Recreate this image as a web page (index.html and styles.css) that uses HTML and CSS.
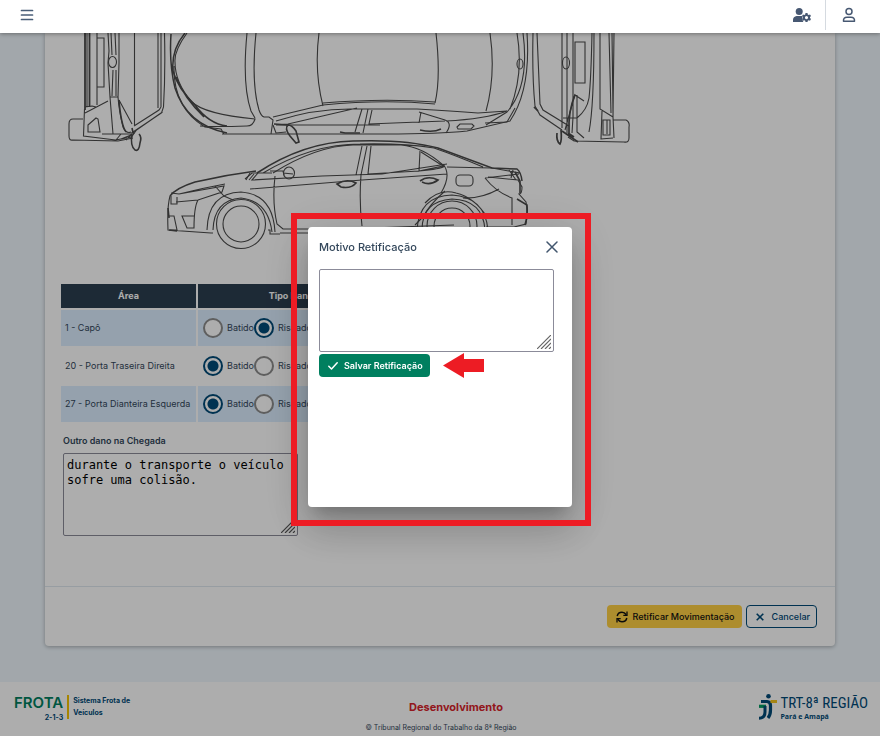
FILE: index.html
```html
<!DOCTYPE html>
<html lang="pt-BR">
<head>
<meta charset="utf-8">
<title>Frota - Retificar Movimentação</title>
<link rel="stylesheet" href="styles.css">
</head>
<body>
<header class="topbar">
  <button class="icon-btn" type="button" aria-label="Menu">
    <svg width="14" height="14" viewBox="0 0 14 14" fill="none" stroke="#495e78" stroke-width="1.7" stroke-linecap="round"><path d="M1.500 2.500h11M1.500 7h11M1.500 11.500h11"/></svg>
  </button>
  <div class="topbar-actions">
    <button class="icon-btn" type="button" aria-label="Configurações do usuário">
      <svg width="18" height="14" viewBox="0 0 18 14" fill="#475872"><circle cx="6.200" cy="3.600" r="3.500"/><path d="M0 14v-2.200Q.2 8.500 3.600 8h5.200l.8.400q-1.100 2.700.7 5.600z"/><path fill-rule="evenodd" d="M12.500 5h2l.3 1.400.9.500 1.300-.5 1 1.700-1 1v1l1 1-1 1.700-1.300-.5-.9.500-.3 1.200h-2l-.3-1.200-.9-.5-1.300.5-1-1.700 1-1v-1l-1-1 1-1.700 1.300.5.900-.5zM13.500 8a1.600 1.600 0 1 0 0 3.200 1.600 1.600 0 0 0 0-3.200z"/></svg>
    </button>
    <span class="topbar-divider"></span>
    <button class="icon-btn" type="button" aria-label="Perfil">
      <svg width="14" height="16" viewBox="0 0 14 16" fill="none" stroke="#475872" stroke-width="1.500"><circle cx="7" cy="4.500" r="3"/><path d="M1.500 14.300Q1.200 10.300 5 10.300h4q3.800 0 3.500 4z" stroke-linejoin="round"/></svg>
    </button>
  </div>
</header>

<main class="page">
  <section class="card">
    <div class="card-body">
      <svg class="car" width="584" height="227" viewBox="61 33 584 227" fill="none" stroke="#4a4a4a" stroke-width="1.100" role="img" aria-label="Diagrama do veículo">
        <!-- front end, seen from above -->
        <path stroke-width="1.800" d="M85 33v77M89.500 33v74"/>
        <path d="M87 33v74M97 33v72M97 38h7v49h-7M108 33l1 18-1 12 2 34h8l1-34V33M111 33l1 22M115 33l1 22M113 70l-1 26M116 70v26M134.500 33v92M158 33v75M161 33v74M164.500 33q1 40-1 74l-2 6-27 18-3 2M161 107l-2 3-25 16M85 107l7-1 4 1M85 113l23-12M84.500 109l-1 27 32 4 16-3 5-7 26-18M83 119H73q-4 0-4 5v12q0 5 4 4l45 1 15-3M88 125l8-7 2 1 2 13H88zM110 97l3 37M118 97q1 14 5 30 3 7 8 5M119 100l13 24M102 134h30l-6 6M116 140l5-6M121 139l10-4"/>
        <ellipse cx="112.500" cy="62" rx="4" ry="5.500"/>
        <path stroke-width="1.600" d="M132 128q1 5 2 6M132 134q-2 12 3 16 4 2 5-7 2-6-1-9M119 100q2 25 7 32"/>
        <!-- roof view -->
        <path stroke-width="1.500" d="M185 33q-14 17-12 38 5 18 22 34 14 19 32 21M176 77q8 21 28 40M171 34q-2 30 4 54 12 37 52 45"/>
        <path d="M187 33q-13 18-12 29 0 21 17 40 12 12 63 17-2 7-8 7-33 1-47 0M174 66q-1 42 31 61l16 2 3 5h51M247 33q-5 52 4 78l4 7M256 33q-5 50 3 77 2 6 5 7h5l4 3-2 14M319 33q-5 38 4 73M323 105q61-6 112-1M323 103q60-5 112-1M435 103q6-25 1-70M490 33q6 42-4 78M517 33q7 41-7 76M523 33q7 53-16 79l-21 13M527 33q4 57-17 88l-43 10q-27 3-82 3H222"/>
        <path d="M273 117l50-12M276 121q40-13 80-12h61q35 2 61 4l29-2M276 125l12-1 69-16M278 125h102M362 109l-7 23M368 109l-5 24M372 110l-3 14 50-2 26-1M419 112l26 8M421 112l-2 11M445 120q8 3 1 13M446 121q39-2 61-10M485 123l22-1 8-14M457 127l3-3h12l2 2-3 3h-13z"/>
        <path stroke-width="1.600" d="M274 124l15 1M288 125q-4 3 2 11l6 7 3-1-3-11q-4-6-8-6M340 132l5 1h15M420 130q13 3 21-1"/>
        <path d="M273 125l3 8 10-1"/><ellipse cx="520" cy="64" rx="3" ry="5"/>
        <!-- rear end, seen from above -->
        <path d="M533 33q-1 43 2 73l5 9 22 15M537 33l3 71 3 6 26 16M562 33v95M567 33v100M573 33v84l-1 16M575 42h10v41h-10zM592 33q-1 47-3 65-2 12-12 20h-14M594 33q0 73-5 99M600 33v76l13 8M609 33l2 80M612 33l1 80M614 33l-1 84 1 21M613 120h13q4 2 3 7v11q0 5-5 4l-50-1-6-4M602 111l-1 28 12-1M603 120h7v15h-7zM607 120v14M575 94l-10 36M577 95v37l7 6M575 95l9 6"/>
        <ellipse cx="566" cy="63" rx="3.500" ry="6"/>
        <path stroke-width="1.700" d="M534 107l4 4M562 131l16 11M568 133l6 4M557 133q-1 8 3 11 2-3 1-14M575 95q-7 16-6 38"/>
        <!-- side view -->
        <path stroke-width="1.500" d="M257 173q47-31 96-32 52-2 85 7l54 20 25 1q4 3 5 12M170 196q6-8 25-14 30-7 61-11"/>
        <path d="M263 173q49-29 97-29 44-1 74 4 23 8 49 19M273 173q43-27 80-28h48q22 2 42 20M170 196q-3 11-2 34l43 3h2M171 193l8 1q24-6 46-10M179 194l45-8-2 6-24 8-22 2M198 200q-4 7-4 28h-7l-5-12h12M169 216h5l3 14h-7M215 186l9 10 9 4M245 179l7-6h20M250 189l112-9 85-6M258 173l-6 7 70-4 60-2 65-10M275 176q-3 26 2 48l6 5h60l111-4M283 229h27M280 233h160M362 146l-6 29M367 146l-6 29q-2 27 1 51M371 146l-3 28 51-3q22-2 26-5M420 151l-1 20 24-5-22-14M443 164q9 11-2 29M447 167l45 1 28 5M445 191q-15 13-22 26l-8 8M463 198q18 1 36-9M485 178q11 14 27 20v27M485 178l34-4M488 177l30 3 4 7q0 7-3 7l7 8q2 11 0 22l-12 3h-28M509 170l7 10M513 170l-2 8"/>
        <circle cx="241" cy="224" r="18"/><circle cx="241" cy="224" r="24.500"/><path d="M207 230q1-37 34-38 32 2 34 40M213 230q1-30 28-32 27 3 31 34M268 230h2v4h10"/>
        <circle cx="452" cy="226" r="18"/><circle cx="452" cy="226" r="25"/><path d="M417 230q2-34 35-35 33 2 36 35M422 230q0-29 30-31 31 1 33 31M425 203q14-15 31-10 18 4 31 24"/>
        <path stroke-width="1.600" d="M337 184q10-6 19-1-5 6-15 4zM420 181q8-6 18-1-8 6-16 2M515 172l5 9v12M517 199l10 6q1 11-2 20M168 208l1 10M169 230l8 1"/>
        <ellipse cx="289" cy="173" rx="5.500" ry="6"/><path d="M270 171h13l1 4M283 173l10 1M249 180l5-6M250 173l-4 7M171 196v8h6v-7"/><rect x="456" y="175" width="17" height="11" rx="4"/>
      </svg>

      <table class="damage">
        <thead><tr><th class="col-area">Área</th><th class="col-type">Tipo Dano</th></tr></thead>
        <tbody>
          <tr><td>1 - Capô</td><td><div class="options"><label><input type="radio" name="d1">Batido</label><label><input type="radio" name="d1" checked>Riscado</label></div></td></tr>
          <tr><td>20 - Porta Traseira Direita</td><td><div class="options"><label><input type="radio" name="d20" checked>Batido</label><label><input type="radio" name="d20">Riscado</label></div></td></tr>
          <tr><td>27 - Porta Dianteira Esquerda</td><td><div class="options"><label><input type="radio" name="d27" checked>Batido</label><label><input type="radio" name="d27">Riscado</label></div></td></tr>
        </tbody>
      </table>

      <div class="other">
        <label for="outro">Outro dano na Chegada</label>
        <div class="area-wrap">
          <textarea id="outro" spellcheck="false">durante o transporte o veículo sofre uma colisão.</textarea>
          <svg class="grip" width="14" height="14" viewBox="0 0 14 14" stroke="#555" stroke-width="1.200"><path d="M0 14L14 0M4 14L14 4M8 14l6-6M12 14l2-2"/></svg>
        </div>
      </div>
    </div>
    <div class="card-actions">
      <button class="btn btn-warn" type="button">
        <svg width="12" height="12" viewBox="0 0 12 12" fill="none" stroke="#111" stroke-width="1.500"><path d="M1.200 5Q2 1.200 6 1.200q2.500 0 4.300 2.500M10.800 7Q10 10.800 6 10.800q-2.500 0-4.300-2.500"/><path d="M11 .5v3.800H7.300M1 11.500V7.700h3.700" stroke-width="1.300"/></svg>
        Retificar Movimentação
      </button>
      <button class="btn btn-outline" type="button">
        <svg width="8" height="8" viewBox="0 0 8 8" stroke="#004a78" stroke-width="1.600"><path d="M.7.7l6.600 6.600M7.300.7L.7 7.300"/></svg>
        Cancelar
      </button>
    </div>
  </section>
</main>

<footer class="footer">
  <div class="brand">
    <div class="brand-name"><strong>FROTA</strong><span>2-1-3</span></div>
    <div class="brand-desc">Sistema Frota de<br>Veículos</div>
  </div>
  <div class="footer-center">
    <strong>Desenvolvimento</strong>
    <span>© Tribunal Regional do Trabalho da 8ª Região</span>
  </div>
  <div class="court">
    <svg width="18" height="26" viewBox="0 0 18 26" fill="none"><circle cx="9.500" cy="2.300" r="2.300" fill="#004a78"/><path d="M2 7.500h6q3.500.2 3.500 4v4.500q0 5-2.500 8" stroke="#004a78" stroke-width="3.200"/><path d="M0 12.300h7" stroke="#009b62" stroke-width="3.200"/><path d="M6 12v6q0 6-6 6.300" stroke="#004a78" stroke-width="3"/><path d="M11.500 7.500H18" stroke="#f2c520" stroke-width="3"/></svg>
    <div class="court-name"><span>TRT-8ª REGIÃO</span><strong>Pará e Amapá</strong></div>
  </div>
</footer>

<div class="backdrop">
  <div class="dialog" role="dialog" aria-labelledby="dlg-title">
    <div class="dialog-head">
      <h2 id="dlg-title">Motivo Retificação</h2>
      <button class="icon-btn" type="button" aria-label="Fechar"><svg width="12" height="12" viewBox="0 0 12 12" stroke="#42566e" stroke-width="1.500" stroke-linecap="round"><path d="M1 1l10 10M11 1L1 11"/></svg></button>
    </div>
    <div class="area-wrap">
      <textarea aria-labelledby="dlg-title"></textarea>
      <svg class="grip" width="14" height="14" viewBox="0 0 14 14" stroke="#666" stroke-width="1.200"><path d="M0 14L14 0M4 14L14 4M8 14l6-6M12 14l2-2"/></svg>
    </div>
    <button class="btn btn-save" type="button">
      <svg width="10" height="8" viewBox="0 0 10 8" fill="none" stroke="#fff" stroke-width="1.500" stroke-linecap="round" stroke-linejoin="round"><path d="M.8 4.300L3.500 7l5.700-6.200"/></svg>
      Salvar Retificação
    </button>
    <div class="marker-frame"></div>
    <svg class="marker-arrow" width="41" height="25" viewBox="0 0 41 25" fill="#ed1c24"><path d="M0 12.500L21 0v6h20v13H21v6z"/></svg>
  </div>
</div>
</body>
</html>
```
FILE: styles.css
```css
* { box-sizing: border-box; }

body {
  margin: 0;
  min-height: 100vh;
  display: flex;
  flex-direction: column;
  background: #eff7fd;
  color: #33475b;
  font: 9px/12px Inter, "Liberation Sans", sans-serif;
}

button { font: inherit; color: inherit; cursor: pointer; }

.topbar {
  position: sticky;
  top: 0;
  z-index: 20;
  display: flex;
  justify-content: space-between;
  height: 33px;
  padding: 0 24px 3px 20px;
  background: #fff;
  box-shadow: 0 1px 4px rgba(0, 0, 0, 0.35);
}

.icon-btn {
  display: flex;
  align-items: center;
  padding: 0;
  border: 0;
  background: none;
}

.topbar-actions { display: flex; gap: 14px; }
.topbar-actions .icon-btn:last-child { margin-left: 2px; }
.topbar-divider { width: 1px; background: #d5dae0; }

.page { flex: 1; padding: 0 45px 36px; }

.card {
  background: #fff;
  border-radius: 0 0 4px 4px;
  box-shadow: 0 1px 4px rgba(0, 0, 0, 0.3);
}

.card-body { padding: 0 16px 50px; }
.car { display: block; max-width: 100%; }

.damage {
  margin: 22px 0 0 -2px;
  border-spacing: 2px;
}
.damage th {
  height: 24px;
  padding: 0;
  background: #2c3e50;
  color: #fff;
  font-weight: 700;
}
.damage td {
  height: 36px;
  padding: 0 4px;
  white-space: nowrap;
}
.damage tr:nth-child(odd) td { background: #dceeff; }
.col-area { width: 135px; }
.col-type { width: 186px; }
.options { display: flex; }
.options label {
  display: flex;
  align-items: center;
  gap: 4px;
  width: 51px;
}

input[type="radio"] {
  appearance: none;
  flex: none;
  width: 20px;
  height: 20px;
  margin: 0 0 0 1px;
  border: 2px solid #8c8c8c;
  border-radius: 50%;
  background: #fff;
}
input[type="radio"]:checked {
  border-color: #004a78;
  background: radial-gradient(circle, #004a78 5px, #fff 6px);
}

.other { padding: 11px 2px 0; }
.other label {
  display: block;
  margin-bottom: 6px;
  font-weight: 600;
}

.area-wrap { position: relative; width: 235px; }
textarea {
  display: block;
  width: 100%;
  height: 83px;
  padding: 4px 3px;
  border: 1px solid #8b8b99;
  border-radius: 2px;
  background: transparent;
  color: #000;
  font: 12px/15px "DejaVu Sans Mono", monospace;
  resize: none;
}
.grip { position: absolute; right: 3px; bottom: 3px; pointer-events: none; }

.card-actions {
  display: flex;
  justify-content: flex-end;
  gap: 4px;
  padding: 18px;
  border-top: 1px solid #dfe7ef;
}
.btn {
  display: flex;
  align-items: center;
  gap: 6px;
  height: 23px;
  padding: 0 6px 0 8px;
  border: 1px solid transparent;
  border-radius: 4px;
  font-weight: 500;
  white-space: nowrap;
}
.btn-warn { gap: 5px; background: #ffd045; color: #111; }
.btn-outline { gap: 8px; padding-left: 9px; border-color: #004a78; background: #fff; color: #004a78; }
.btn-save { margin-top: 2px; background: #007f5f; color: #fff; font-weight: 600; }

.footer {
  display: grid;
  grid-template-columns: 1fr auto 1fr;
  height: 54px;
  padding: 0 12px 0 14px;
  background: #fff;
}
.brand { display: flex; align-items: flex-start; padding-top: 13px; color: #004a78; font-weight: 700; }
.brand-name { display: flex; flex-direction: column; align-items: flex-end; padding-right: 4px; }
.brand-name strong { color: #007f5f; font-size: 15px; font-weight: 600; line-height: 15px; }
.brand-name span { font-size: 7px; line-height: 16px; }
.brand-desc { padding-left: 4px; border-left: 2px solid #f5c400; font-size: 7px; }

.footer-center { display: flex; flex-direction: column; align-items: center; padding-top: 18px; font-size: 7px; gap: 8px; }
.footer-center strong { padding-left: 30px; color: #d8232a; font-size: 11px; line-height: 14px; }

.court { display: flex; justify-content: flex-end; align-items: flex-start; gap: 3px; padding-top: 12px; color: #004a78; }
.court-name { display: flex; flex-direction: column; white-space: nowrap; }
.court-name span { font: 400 15px/18px "Roboto Condensed", "Open Sans Condensed", "Liberation Sans Narrow", sans-serif; }
.court-name strong { font: 700 7px/10px "Open Sans", sans-serif; }

.backdrop {
  position: fixed;
  inset: 0;
  z-index: 10;
  display: flex;
  align-items: center;
  justify-content: center;
  padding-bottom: 2px;
  background: rgba(0, 0, 0, 0.32);
}
.dialog {
  position: relative;
  width: 264px;
  min-height: 280px;
  padding: 0 11px 16px;
  border-radius: 4px;
  background: #fff;
  box-shadow: 0 11px 15px -7px rgba(0, 0, 0, 0.2), 0 24px 38px 3px rgba(0, 0, 0, 0.14), 0 9px 46px 8px rgba(0, 0, 0, 0.12);
}
.dialog-head {
  display: flex;
  align-items: center;
  justify-content: space-between;
  height: 42px;
  padding: 0 3px 2px 0;
}
.dialog-head h2 { margin: 0; font-size: 11px; font-weight: 500; }

/* Annotation drawn over the dialog */
.marker-frame {
  position: absolute;
  inset: -14px -19px -19px -17px;
  border: 6px solid #ed1c24;
  pointer-events: none;
}
.marker-arrow { position: absolute; left: 135px; top: 126px; }
```
